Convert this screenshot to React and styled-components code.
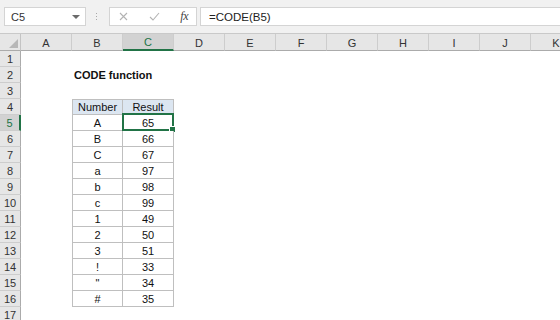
import React from "react";
import styled, { createGlobalStyle } from "styled-components";

const GlobalStyle = createGlobalStyle`
  body {
    margin: 0;
    background: #fff;
    font-family: "Liberation Sans", Arial, sans-serif;
  }
`

const COLS = ["A", "B", "C", "D", "E", "F", "G", "H", "I", "J", "K"]
const ROWS = 17

const data = [
  ["A", 65], ["B", 66], ["C", 67], ["a", 97], ["b", 98], ["c", 99],
  ["1", 49], ["2", 50], ["3", 51], ["!", 33], ["\"", 34], ["#", 35],
]

const Page = styled.div`
  width: 560px;
  height: 320px;
  overflow: hidden;
  background: #fff;
`

const Toolbar = styled.div`
  display: flex;
  align-items: center;
  height: 34px;
  padding: 0 0 0 4px;
  background: #f1f1f1;
  border-bottom: 1px solid #c9c9c9;
  box-sizing: border-box;
`

const Box = styled.div`
  display: flex;
  align-items: center;
  height: 19px;
  background: #fff;
  border: 1px solid #d4d4d4;
  box-sizing: border-box;
  font-size: 11px;
  color: #333;
`

const NameBox = styled(Box)`
  width: 82px;
  padding: 0 5px 0 6px;
  justify-content: space-between;
`

const Caret = styled.span`
  width: 0;
  height: 0;
  border-left: 4px solid transparent;
  border-right: 4px solid transparent;
  border-top: 4px solid #6b6b6b;
`

const Grip = styled.div`
  display: flex;
  flex-direction: column;
  gap: 2px;
  margin: 0 12px 0 10px;

  span {
    width: 1px;
    height: 1px;
    background: #a8a8a8;
  }
`

const FnBox = styled(Box)`
  width: 88px;
  padding: 0 8px 0 9px;
  justify-content: space-between;
`

const Fx = styled.span`
  font-family: "Liberation Serif", serif;
  font-style: italic;
  font-size: 12px;
  color: #444;
  letter-spacing: -0.5px;
`

const FormulaBox = styled(Box)`
  flex: 1;
  margin-left: 3px;
  padding-left: 8px;
  border-right: none;
  font-size: 11.5px;
  color: #222;
`

const Sheet = styled.div`
  display: grid;
  grid-template-columns: 21px repeat(11, 51px);
  grid-template-rows: 17px repeat(${ROWS}, 16px);
  font-size: 11px;
`

const Corner = styled.div`
  position: relative;
  background: #e6e6e6;
  border-right: 1px solid #c4c4c4;
  border-bottom: 1px solid #ababab;
  box-sizing: border-box;

  &::after {
    content: "";
    position: absolute;
    right: 2px;
    bottom: 2px;
    width: 0;
    height: 0;
    border-left: 9px solid transparent;
    border-bottom: 9px solid #b7b7b7;
  }
`

const ColHead = styled.div`
  display: flex;
  align-items: center;
  justify-content: center;
  background: ${(p) => (p.$active ? "#d2d2d2" : "#e6e6e6")};
  border-right: 1px solid #cdcdcd;
  border-bottom: ${(p) => (p.$active ? "2px solid #217346" : "1px solid #ababab")};
  box-sizing: border-box;
  color: ${(p) => (p.$active ? "#217346" : "#333")};
  padding-top: 1px;
`

const RowHead = styled.div`
  display: flex;
  align-items: center;
  justify-content: center;
  background: ${(p) => (p.$active ? "#d2d2d2" : "#e6e6e6")};
  border-right: ${(p) => (p.$active ? "2px solid #217346" : "1px solid #ababab")};
  border-bottom: 1px solid #cdcdcd;
  box-sizing: border-box;
  color: ${(p) => (p.$active ? "#217346" : "#333")};
`

const Cell = styled.div`
  position: relative;
  z-index: ${(p) => (p.$table ? 1 : 2)};
  display: flex;
  align-items: center;
  justify-content: ${(p) => (p.$center ? "center" : "flex-start")};
  padding-left: ${(p) => (p.$center ? 0 : "2px")};
  box-sizing: border-box;
  min-width: 0;
  overflow: visible;
  background: ${(p) => (p.$head ? "#dce6f1" : p.$table ? "#fff" : "transparent")};
  color: #111;
  font-weight: ${(p) => (p.$bold ? 700 : 400)};
  white-space: nowrap;
  border-right: ${(p) => (p.$table ? "1px solid #bfbfbf" : "none")};
  border-bottom: ${(p) => (p.$table ? "1px solid #bfbfbf" : "none")};
  border-left: ${(p) => (p.$left ? "1px solid #bfbfbf" : "none")};
  border-top: ${(p) => (p.$top ? "1px solid #bfbfbf" : "none")};
`

const Selection = styled.div`
  position: absolute;
  left: -1px;
  top: -2px;
  right: -1px;
  bottom: -1px;
  border: 2px solid #217346;
  pointer-events: none;

  &::after {
    content: "";
    position: absolute;
    right: -4px;
    bottom: -4px;
    width: 5px;
    height: 5px;
    background: #217346;
    border: 1px solid #fff;
  }
`

const XIcon = () => (
  <svg width="9" height="9" viewBox="0 0 9 9">
    <path d="M1 1L8 8M8 1L1 8" stroke="#b3b3b3" strokeWidth="1.1" fill="none" />
  </svg>
)

const CheckIcon = () => (
  <svg width="11" height="9" viewBox="0 0 11 9">
    <path d="M1 5L4 8L10 1" stroke="#b3b3b3" strokeWidth="1.1" fill="none" />
  </svg>
)

const cellFor = (col, row) => {
  if (col === "B" && row === 2) return { text: "CODE function", bold: true }
  if (row === 4 && col === "B") return { text: "Number", table: true, head: true, center: true, left: true, top: true }
  if (row === 4 && col === "C") return { text: "Result", table: true, head: true, center: true, top: true }
  if (row >= 5 && row <= 16) {
    const [ch, code] = data[row - 5]
    if (col === "B") return { text: ch, table: true, center: true, left: true }
    if (col === "C") return { text: code, table: true, center: true, selected: row === 5 }
  }
  return { text: "" }
}

const App = () => {
  const rows = []
  for (let r = 1; r <= ROWS; r++) {
    rows.push(<RowHead key={`h${r}`} $active={r === 5}>{r}</RowHead>)
    COLS.forEach((c) => {
      const cell = cellFor(c, r)
      rows.push(
        <Cell
          key={`${c}${r}`}
          $table={cell.table}
          $head={cell.head}
          $center={cell.center}
          $left={cell.left}
          $top={cell.top}
          $bold={cell.bold}
        >
          {cell.text}
          {cell.selected && <Selection />}
        </Cell>
      )
    })
  }

  return (
    <Page>
      <GlobalStyle />
      <Toolbar>
        <NameBox>
          C5
          <Caret />
        </NameBox>
        <Grip>
          <span />
          <span />
          <span />
        </Grip>
        <FnBox>
          <XIcon />
          <CheckIcon />
          <Fx>fx</Fx>
        </FnBox>
        <FormulaBox>=CODE(B5)</FormulaBox>
      </Toolbar>
      <Sheet>
        <Corner />
        {COLS.map((c) => (
          <ColHead key={c} $active={c === "C"}>{c}</ColHead>
        ))}
        {rows}
      </Sheet>
    </Page>
  )
}

export default App
